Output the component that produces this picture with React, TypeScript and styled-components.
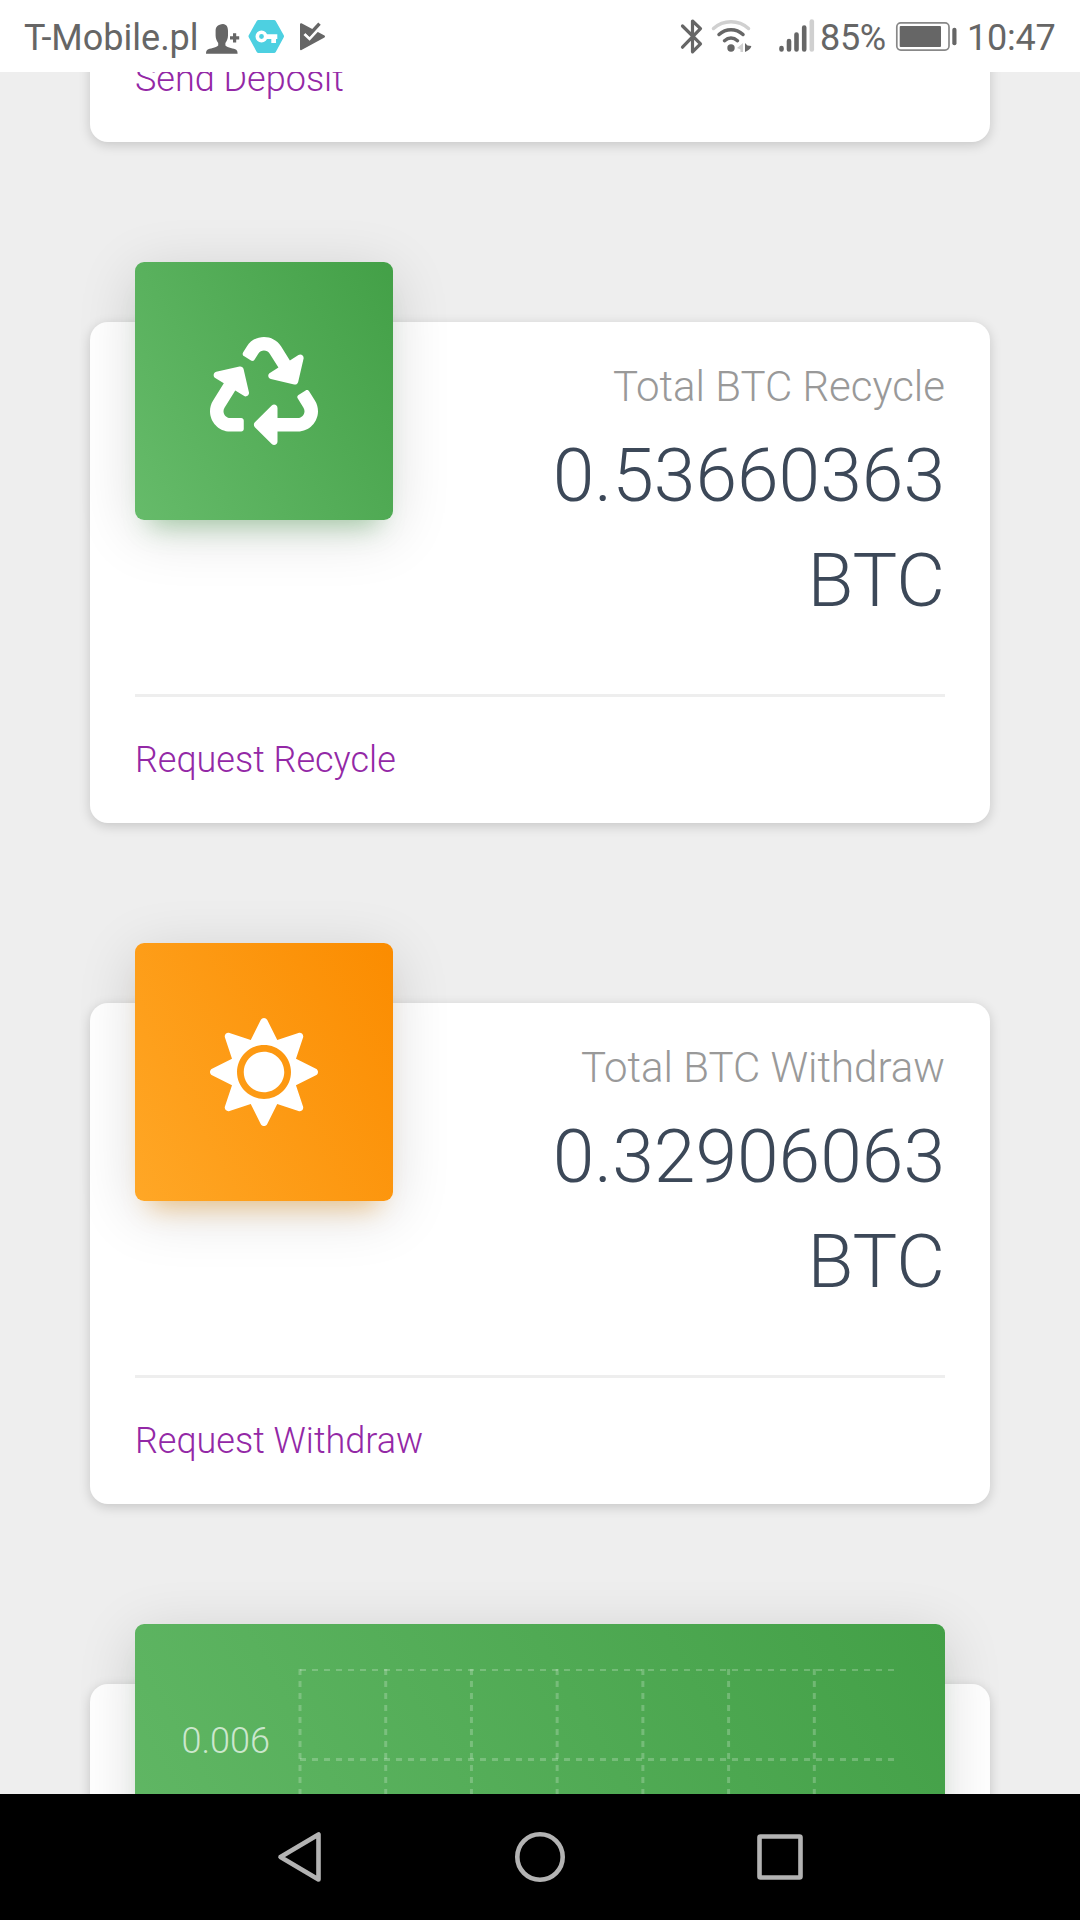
import React from "react";
import styled, { createGlobalStyle } from "styled-components";
import { FaRecycle, FaSun } from "react-icons/fa";

const GlobalStyle = createGlobalStyle`
  * { box-sizing: border-box; }
  body { margin: 0; background: #eee; }
`;

const Screen = styled.div`
  display: flex;
  flex-direction: column;
  width: 1080px;
  height: 1920px;
  overflow: hidden;
  background: #eee;
  font-family: Roboto, "Liberation Sans", sans-serif;
  font-weight: 300;
`;

const StatusBar = styled.header`
  display: flex;
  justify-content: space-between;
  flex: none;
  height: 72px;
  padding: 0 24px;
  background: #fff;
  color: #666;
  font-size: 36px;
  font-weight: 400;
  line-height: 77px;
  white-space: nowrap;
`;

const StatusGroup = styled.div`
  display: flex;
`;

const StatusText = styled.span<{ $width: number; $spacing?: number }>`
  width: ${(p) => p.$width}px;
  letter-spacing: ${(p) => p.$spacing ?? 0}px;
`;

const StatusIcon = styled.svg`
  display: block;
  flex: none;
  height: 72px;
`;

const Page = styled.main`
  display: flex;
  flex-direction: column;
  gap: 180px;
  flex: 1;
  min-height: 0;
  padding: 0 90px;
  overflow: hidden;
`;

const Card = styled.section`
  flex: none;
  height: 501px;
  display: flex;
  flex-direction: column;
  padding: 0 45px;
  border-radius: 18px;
  background: #fff;
  box-shadow: 0 3px 12px rgba(0, 0, 0, 0.17);
`;

const ScrolledCard = styled(Card)`
  height: 140px;
  margin-top: -70px;
  justify-content: flex-end;
`;

const CardTop = styled.div`
  display: flex;
  justify-content: space-between;
  height: 372px;
`;

type Tone = "green" | "orange";
const tones = {
  green: { from: "#66bb6a", to: "#43a047", rgb: "76, 175, 80" },
  orange: { from: "#ffa726", to: "#fb8c00", rgb: "255, 152, 0" },
};

const Raised = styled.div<{ $tone: Tone }>`
  flex: none;
  margin-top: -60px;
  border-radius: 9px;
  color: #fff;
  background: linear-gradient(60deg, ${(p) => tones[p.$tone].from}, ${(p) => tones[p.$tone].to});
  box-shadow:
    0 12px 60px 0 rgba(0, 0, 0, 0.14),
    0 21px 24px -15px rgba(${(p) => tones[p.$tone].rgb}, 0.4);
`;

const IconTile = styled(Raised)`
  display: flex;
  align-items: center;
  justify-content: center;
  width: 258px;
  height: 258px;
  font-size: 108px;
`;

const Stat = styled.div`
  width: 460px;
  padding-top: 33px;
  text-align: right;
`;

const Category = styled.p`
  margin: 0 0 5px;
  color: #999;
  font-size: 42px;
  line-height: 63px;
`;

const Value = styled.h3`
  margin: 0;
  color: #3c4858;
  font-size: 75px;
  font-weight: 300;
  line-height: 105px;
`;

const Footer = styled.footer<{ $divided?: boolean }>`
  padding: 36px 0;
  border-top: ${(p) => (p.$divided ? "3px solid #eee" : "0")};
`;

const Link = styled.a`
  display: block;
  color: #9328a6;
  font-size: 36px;
  line-height: 54px;
`;

const ChartPanel = styled(Raised)`
  display: flex;
  height: 540px;
  padding: 45px 0 0 46.5px;
`;

const AxisLabel = styled.span`
  flex: none;
  width: 116.5px;
  margin-top: 45px;
  height: 54px;
  color: rgba(255, 255, 255, 0.7);
  font-size: 36px;
  line-height: 54px;
`;

const Grid = styled.svg`
  display: block;
  flex: none;
  width: 600px;
  height: 450px;
`;

const NavBar = styled.nav`
  flex: none;
  display: flex;
  justify-content: center;
  align-items: center;
  gap: 180px;
  height: 126px;
  background: #000;
`;

const NavIcon = styled.svg`
  width: 60px;
  height: 60px;
  fill: none;
  stroke: #b3b3b3;
  stroke-width: 4.6;
  stroke-linejoin: round;
`;

const columns = [0, 1, 2, 3, 4, 5, 6].map((i) => 2 + i * 85.72);
const rows = [0.5, 90.5, 180, 269.5, 359];

function StatCard(props: {
  tone: Tone;
  icon: React.ReactNode;
  label: string;
  value: string;
  link: string;
}) {
  return (
    <Card>
      <CardTop>
        <IconTile $tone={props.tone}>{props.icon}</IconTile>
        <Stat>
          <Category>{props.label}</Category>
          <Value>{props.value}</Value>
        </Stat>
      </CardTop>
      <Footer $divided>
        <Link>{props.link}</Link>
      </Footer>
    </Card>
  );
}

export default function App() {
  return (
    <>
      <GlobalStyle />
      <Screen>
        <StatusBar>
          <StatusGroup>
            <StatusText $width={176}>T-Mobile.pl</StatusText>
            <StatusIcon width="44" viewBox="200 0 44 72">
              <path
                fill="#666"
                d="M223 24c3.500.3 5 2.800 5 7v4.500c0 3.500-1.300 5.500-2.600 7.500v2.500c2 2.400 8.800 2.800 10.800 4.300 1 .8 1.400 2.200 1.400 3.900H206c0-1.700.4-3.100 1.400-3.900 2-1.500 8.800-1.900 10.800-4.300V43c-1.300-2-2.600-4-2.600-7.500V31c0-4.400 2.400-6.500 7.400-7z"
              />
              <path stroke="#666" strokeWidth="3.200" d="M230 37.800h9.200M234.600 33.200v9.200" />
            </StatusIcon>
            <StatusIcon width="48" viewBox="244 0 48 72">
              <path
                fill="#4dd0e1"
                stroke="#4dd0e1"
                strokeWidth="4"
                strokeLinejoin="round"
                d="M258.500 22h15.500l8 14.300-8 14.700h-15.500l-8-14.700z"
              />
              <circle cx="261.500" cy="36.500" r="4.200" fill="none" stroke="#fff" strokeWidth="3.600" />
              <path fill="#fff" d="M266 34.300h11.300v4.600H276v4h-4.700v-4H266z" />
            </StatusIcon>
            <StatusIcon width="40" viewBox="292 0 40 72">
              <path
                fill="#666"
                stroke="#666"
                strokeWidth="2"
                strokeLinejoin="round"
                d="M301 24.200v25l23-12.700z"
              />
              <path fill="none" stroke="#fff" strokeWidth="3" d="M304.500 34l5 4.600L321.300 26" />
              <path fill="none" stroke="#666" strokeWidth="3.400" d="M306 31l3.500 3.500L319.500 23.700" />
            </StatusIcon>
          </StatusGroup>
          <StatusGroup>
            <StatusIcon width="30" viewBox="677 0 30 72">
              <path
                fill="none"
                stroke="#666"
                strokeWidth="3.200"
                strokeLinecap="round"
                strokeLinejoin="round"
                d="M682.500 26l18 17.800-8 8V21l8 7.700-18 18.500"
              />
            </StatusIcon>
            <StatusIcon width="66" viewBox="707 0 66 72">
              <g fill="none" strokeWidth="3.500" strokeLinecap="round">
                <path stroke="#d0d0d0" d="M713.500 28.500c10-9 25-9 35 0" />
                <path stroke="#666" d="M719 34.500c7-6.500 17-6.500 24 0M724.500 40.700c4-3.500 9-3.500 13 0" />
              </g>
              <circle cx="731" cy="48" r="3.700" fill="#666" />
              <path fill="#d0d0d0" d="M743 43v9h-2.500v-2.500L737 48z" />
              <path fill="#666" d="M745 43l2.500 2.500 3.800.5c-.3 2-1.800 4-6.300 6z" />
            </StatusIcon>
            <StatusIcon width="47" viewBox="773 0 47 72">
              <g strokeWidth="4.600" strokeLinecap="round" stroke="#666">
                <path d="M781.500 48v1.500M789 41v8.500M796.500 34.500v15M804.200 27.500v22" />
                <path stroke="#d0d0d0" d="M811.800 21.500v28" />
              </g>
            </StatusIcon>
            <StatusText $width={72} $spacing={-0.3}>85%</StatusText>
            <StatusIcon width="75" viewBox="892 0 75 72">
              <rect x="896.800" y="22.900" width="52.200" height="27.200" rx="4" fill="none" stroke="#888" strokeWidth="1.700" />
              <rect x="899.700" y="26" width="41.300" height="21" rx="1" fill="#666" />
              <rect x="952.300" y="27.700" width="4.200" height="17.600" rx="2" fill="#666" />
            </StatusIcon>
            <StatusText $width={89} $spacing={-0.2}>10:47</StatusText>
          </StatusGroup>
        </StatusBar>
        <Page>
          <ScrolledCard>
            <Footer>
              <Link>Send Deposit</Link>
            </Footer>
          </ScrolledCard>
          <StatCard
            tone="green"
            icon={<FaRecycle />}
            label="Total BTC Recycle"
            value="0.53660363 BTC"
            link="Request Recycle"
          />
          <StatCard
            tone="orange"
            icon={<FaSun />}
            label="Total BTC Withdraw"
            value="0.32906063 BTC"
            link="Request Withdraw"
          />
          <Card>
            <ChartPanel $tone="green">
              <AxisLabel>0.006</AxisLabel>
              <Grid
                viewBox="0 0 600 450"
                fill="none"
                stroke="#fff"
                strokeOpacity="0.22"
                strokeWidth="3"
                strokeDasharray="6"
              >
                {columns.map((x) => (
                  <path key={x} d={`M${x} 0V450`} />
                ))}
                {rows.map((y) => (
                  <path key={y} d={`M2 ${y}H596`} />
                ))}
              </Grid>
            </ChartPanel>
          </Card>
        </Page>
        <NavBar>
          <NavIcon viewBox="270 1827 60 60">
            <path d="M318.500 1834.500v45l-38-22.500z" />
          </NavIcon>
          <NavIcon viewBox="510 1827 60 60">
            <circle cx="540" cy="1857" r="22.700" />
          </NavIcon>
          <NavIcon viewBox="750 1827 60 60">
            <rect x="759.500" y="1836.500" width="41" height="41" rx="1" />
          </NavIcon>
        </NavBar>
      </Screen>
    </>
  );
}
